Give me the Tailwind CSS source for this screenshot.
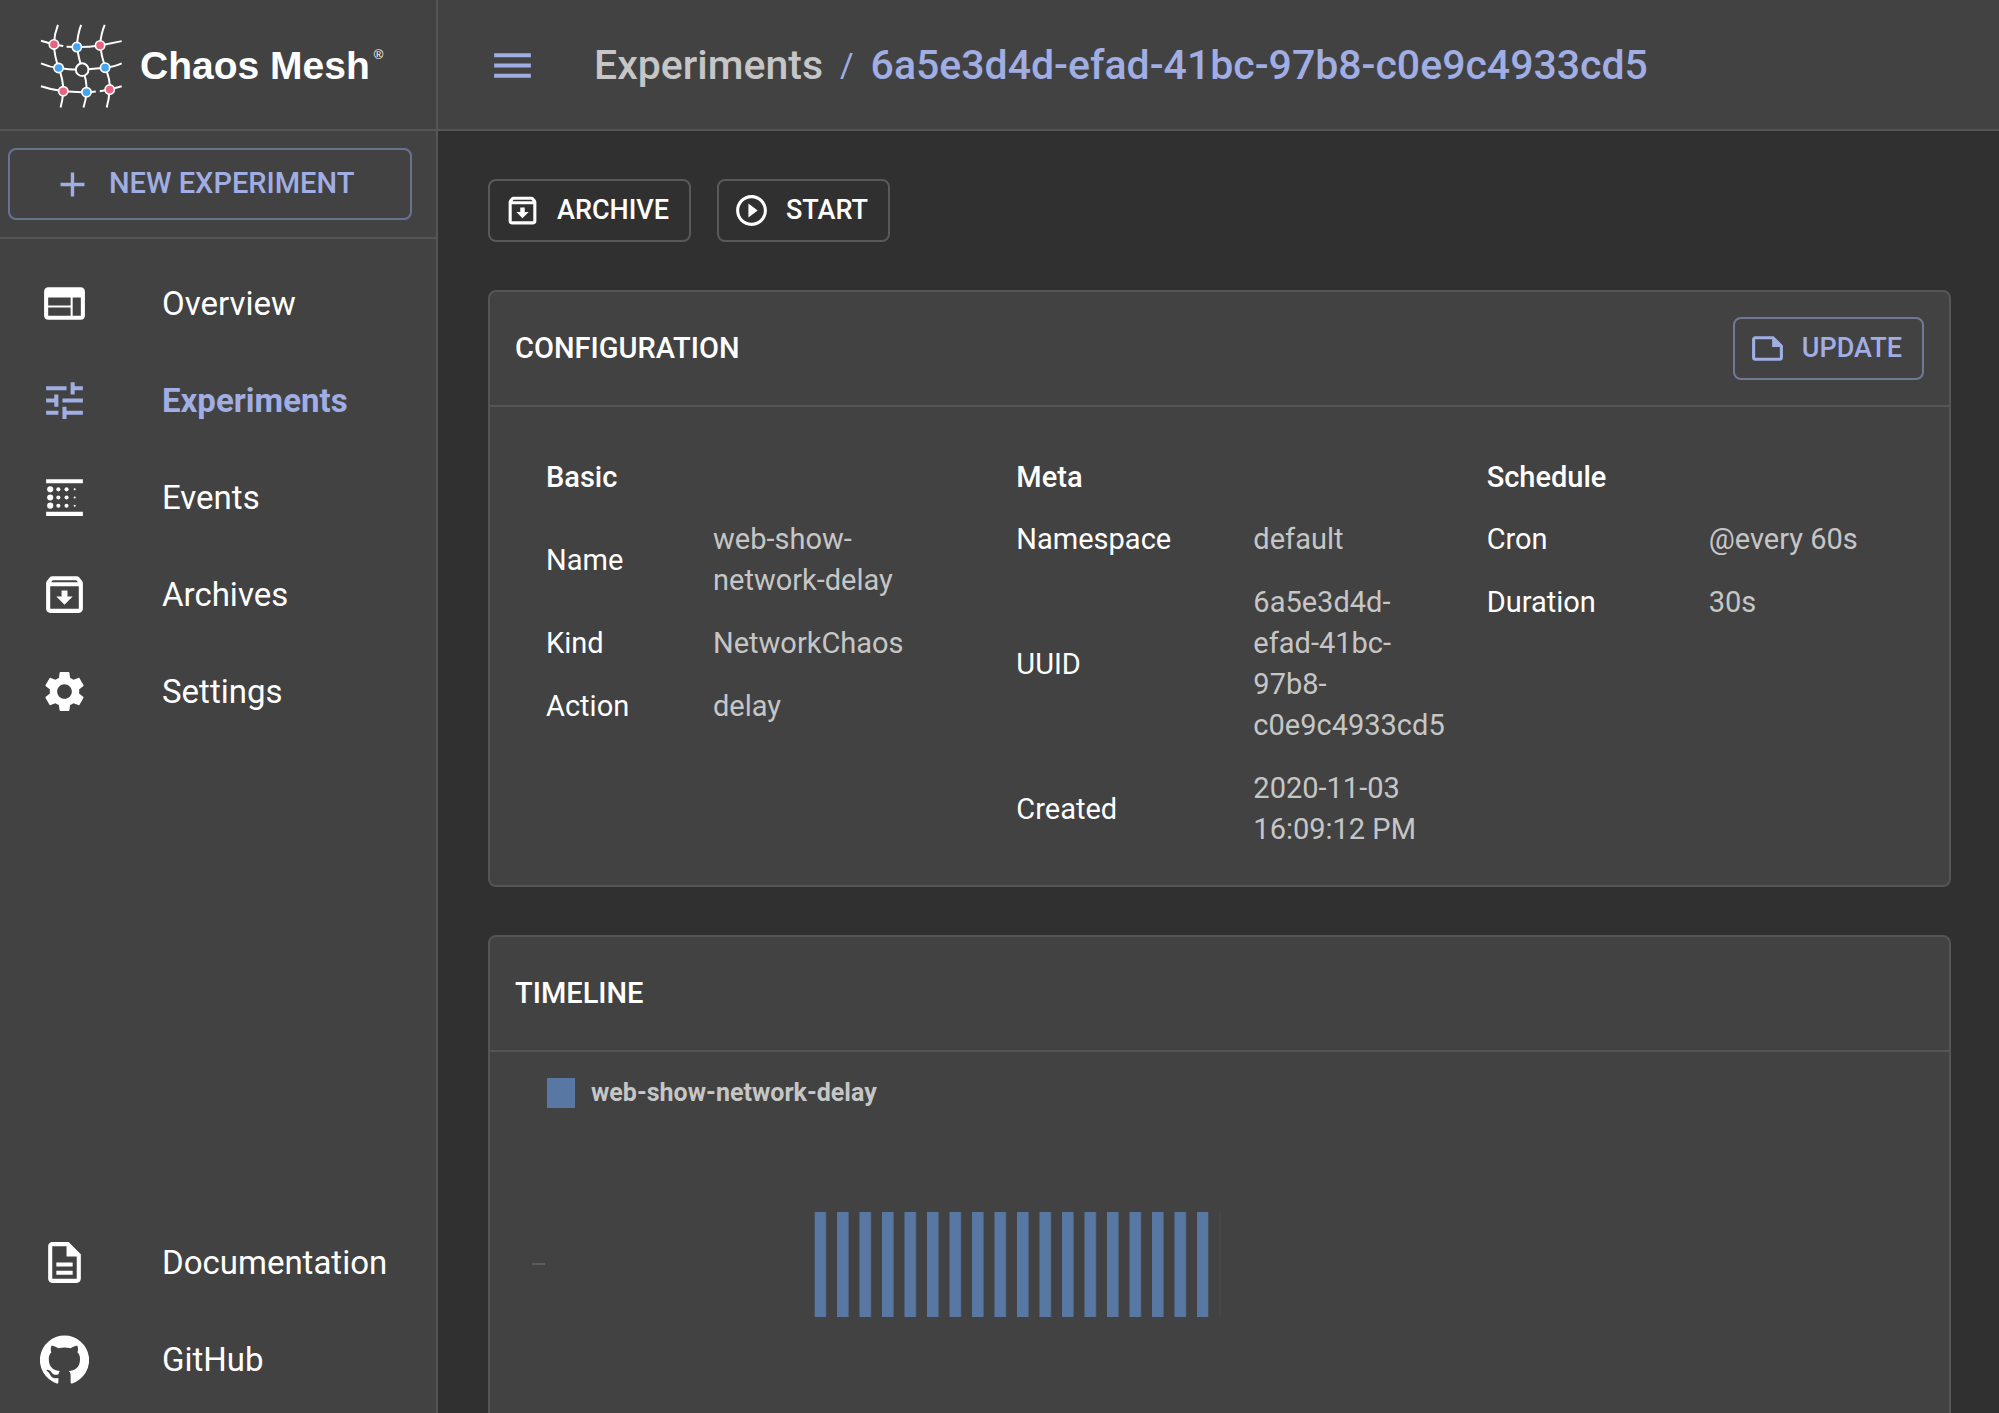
<!DOCTYPE html>
<html lang="en">

<head>
  <meta charset="UTF-8">
  <meta name="viewport" content="width=device-width, initial-scale=1.0">
  <title>Chaos Mesh Dashboard</title>
  <script src="https://cdn.jsdelivr.net/npm/@tailwindcss/browser@4"></script>
</head>

<body class="flex h-screen overflow-hidden bg-[#303030] font-['Roboto',sans-serif] text-white">

  <!-- Sidebar -->
  <aside class="flex w-[438px] shrink-0 flex-col border-r-2 border-[#555555] bg-[#424242]">
    <a href="#" class="flex h-[131px] shrink-0 items-center gap-[17px] border-b-2 border-[#555555] pt-[3px] pl-10">
      <svg class="h-[85px] w-[83px]" viewBox="120 70 250 255" fill="none" stroke="#fff" stroke-width="6">
        <path d="M174 72Q163 100 162 130Q163 165 176 202Q190 235 190 272Q188 300 182 321" />
        <path d="M244 72Q233 100 231 139Q236 170 247 207Q262 235 260 275Q258 300 251 321" />
        <path d="M315 72Q303 100 301 134Q305 165 316 201Q332 235 330 267Q328 295 321 321" />
        <path d="M123 120L162 131L190 136M200 138L231 139Q270 139 301 134L366 121" />
        <path d="M123 188Q150 200 176 202Q210 208 247 207L316 201Q345 198 366 188" />
        <path d="M123 257Q155 268 190 272L260 276L288 273M300 272L330 267L366 257" />
        <g fill="#e8647c" stroke-width="5">
          <circle cx="162" cy="131" r="14" />
          <circle cx="301" cy="134" r="14" />
          <circle cx="190" cy="272" r="14" />
          <circle cx="330" cy="267" r="14" />
        </g>
        <g fill="#45a5f5" stroke-width="5">
          <circle cx="231" cy="139" r="14" />
          <circle cx="176" cy="202" r="14" />
          <circle cx="316" cy="201" r="14" />
          <circle cx="260" cy="275" r="14" />
        </g>
        <circle cx="247" cy="207" r="19" fill="#424242" />
      </svg>
      <span class="flex items-start gap-1 font-['Liberation_Sans',sans-serif] font-bold">
        <span class="text-[39px] leading-[46px]">Chaos Mesh</span>
        <span class="text-[13px] leading-6 font-normal">®</span>
      </span>
    </a>

    <div class="border-b-2 border-[#555555] pt-[17px] pr-6 pb-[17px] pl-2">
      <button type="button" class="flex h-[72px] w-full items-center gap-4 rounded-lg border-2 border-[#6a7190] pl-[42px] text-[29px] font-medium text-[#a0aee4]">
        <svg class="size-[41px]" viewBox="0 0 24 24" fill="currentColor"><path d="M19 13h-6v6h-2v-6H5v-2h6V5h2v6h6v2z" /></svg>
        NEW EXPERIMENT
      </button>
    </div>

    <nav class="flex grow flex-col pt-4 pb-[5px] text-[33px]">
      <a href="#" class="flex h-[97px] items-center gap-[73px] pl-10">
        <svg class="size-[49px]" viewBox="0 0 24 24" fill="currentColor"><path d="M20 4H4c-1.1 0-1.99.9-1.99 2L2 18c0 1.1.9 2 2 2h16c1.1 0 2-.9 2-2V6c0-1.1-.9-2-2-2zm-5 14H4v-4h11v4zm0-5H4V9h11v4zm5 5h-4V9h4v9z" /></svg>
        Overview
      </a>
      <a href="#" class="flex h-[97px] items-center gap-[73px] pl-10 font-bold text-[#a0aee4]">
        <svg class="size-[49px]" viewBox="0 0 24 24" fill="currentColor"><path d="M3 17v2h6v-2H3zM3 5v2h10V5H3zm10 16v-2h8v-2h-8v-2h-2v6h2zM7 9v2H3v2h4v2h2V9H7zm14 4v-2H11v2h10zm-6-4h2V7h4V5h-4V3h-2v6z" /></svg>
        Experiments
      </a>
      <a href="#" class="flex h-[97px] items-center gap-[73px] pl-10">
        <svg class="size-[49px]" viewBox="0 0 24 24" fill="currentColor">
          <path d="M3 3h18v2H3zM3 19h18v2H3z" />
          <circle cx="5" cy="8" r="1.5" /><circle cx="5" cy="12" r="1.5" /><circle cx="5" cy="16" r="1.5" />
          <circle cx="9" cy="8" r="1" /><circle cx="9" cy="12" r="1" /><circle cx="9" cy="16" r="1" />
          <circle cx="13" cy="8" r="1" /><circle cx="13" cy="12" r="1" /><circle cx="13" cy="16" r="1" />
          <circle cx="17" cy="8" r=".5" /><circle cx="17" cy="12" r=".5" /><circle cx="17" cy="16" r=".5" />
        </svg>
        Events
      </a>
      <a href="#" class="flex h-[97px] items-center gap-[73px] pl-10">
        <svg class="size-[49px]" viewBox="0 0 24 24" fill="currentColor"><path d="M20.54 5.23l-1.39-1.68C18.88 3.21 18.47 3 18 3H6c-.47 0-.88.21-1.16.55L3.46 5.23C3.17 5.57 3 6.02 3 6.5V19c0 1.1.9 2 2 2h14c1.1 0 2-.9 2-2V6.5c0-.48-.17-.93-.46-1.27zM6.24 5h11.52l.83 1H5.42l.82-1zM5 19V8h14v11H5zm8.45-9h-2.9v3H8l4 4 4-4h-2.55z" /></svg>
        Archives
      </a>
      <a href="#" class="flex h-[97px] items-center gap-[73px] pl-10">
        <svg class="size-[49px]" viewBox="0 0 24 24" fill="currentColor"><path d="M19.14 12.94c.04-.3.06-.61.06-.94 0-.32-.02-.64-.07-.94l2.03-1.58c.18-.14.23-.41.12-.61l-1.92-3.32c-.12-.22-.37-.29-.59-.22l-2.39.96c-.5-.38-1.03-.7-1.62-.94l-.36-2.54c-.04-.24-.24-.41-.48-.41h-3.84c-.24 0-.43.17-.47.41l-.36 2.54c-.59.24-1.13.57-1.62.94l-2.39-.96c-.22-.08-.47 0-.59.22L2.74 8.87c-.12.21-.08.47.12.61l2.03 1.58c-.05.3-.09.63-.09.94s.02.64.07.94l-2.03 1.58c-.18.14-.23.41-.12.61l1.92 3.32c.12.22.37.29.59.22l2.39-.96c.5.38 1.03.7 1.62.94l.36 2.54c.05.24.24.41.48.41h3.84c.24 0 .44-.17.47-.41l.36-2.54c.59-.24 1.13-.56 1.62-.94l2.39.96c.22.08.47 0 .59-.22l1.92-3.32c.12-.22.07-.47-.12-.61l-2.01-1.58zM12 15.6c-1.98 0-3.6-1.62-3.6-3.6s1.62-3.6 3.6-3.6 3.6 1.62 3.6 3.6-1.62 3.6-3.6 3.6z" /></svg>
        Settings
      </a>
      <a href="#" class="mt-auto flex h-[97px] items-center gap-[73px] pl-10">
        <svg class="size-[49px]" viewBox="0 0 24 24" fill="currentColor"><path d="M8 16h8v2H8zm0-4h8v2H8zm6-10H6c-1.1 0-2 .9-2 2v16c0 1.1.89 2 1.99 2H18c1.1 0 2-.9 2-2V8l-6-6zm4 18H6V4h7v5h5v11z" /></svg>
        Documentation
      </a>
      <a href="#" class="flex h-[97px] items-center gap-[73px] pl-10">
        <svg class="size-[49px]" viewBox="0 0 24 24" fill="currentColor"><path d="M12 .3a12 12 0 0 0-3.8 23.4c.6.1.8-.3.8-.6v-2c-3.3.7-4-1.6-4-1.6-.6-1.4-1.4-1.8-1.4-1.8-1-.7.1-.7.1-.7 1.2 0 1.9 1.2 1.9 1.2 1 1.8 2.8 1.3 3.5 1 0-.8.4-1.3.7-1.6-2.7-.3-5.5-1.3-5.5-6 0-1.2.5-2.3 1.3-3.1-.2-.4-.6-1.6 0-3.2 0 0 1-.3 3.4 1.2a11.5 11.5 0 0 1 6 0c2.3-1.5 3.3-1.2 3.3-1.2.6 1.6.2 2.8 0 3.2.9.8 1.3 1.9 1.3 3.2 0 4.6-2.8 5.6-5.5 5.9.5.4.9 1 .9 2.2v3.3c0 .3.1.7.8.6A12 12 0 0 0 12 .3" /></svg>
        GitHub
      </a>
    </nav>
  </aside>

  <div class="flex min-w-0 grow flex-col">
    <!-- Top bar -->
    <header class="flex h-[131px] shrink-0 items-center gap-[57px] border-b-2 border-[#555555] bg-[#424242] pt-[2px] pl-[50px] text-[#a0aee4]">
      <button type="button" aria-label="Toggle menu">
        <svg class="size-[49px]" viewBox="0 0 24 24" fill="currentColor"><path d="M3 18h18v-2H3v2zm0-5h18v-2H3v2zm0-7v2h18V6H3z" /></svg>
      </button>
      <div class="flex items-center gap-[17px] text-[41px] font-medium">
        <a href="#" class="text-[#c6c6c6]">Experiments</a>
        <span class="text-[33px] font-normal">/</span>
        <h1>6a5e3d4d-efad-41bc-97b8-c0e9c4933cd5</h1>
      </div>
    </header>

    <main class="flex grow flex-col gap-12 overflow-hidden pt-12 pr-12 pl-[50px]">
      <div class="flex gap-[26px] text-[27px] font-medium">
        <button type="button" class="flex h-[63px] items-center gap-4 rounded-lg border-2 border-[#595959] pr-5 pl-[14px]">
          <svg class="size-[37px]" viewBox="0 0 24 24" fill="currentColor"><path d="M20.54 5.23l-1.39-1.68C18.88 3.21 18.47 3 18 3H6c-.47 0-.88.21-1.16.55L3.46 5.23C3.17 5.57 3 6.02 3 6.5V19c0 1.1.9 2 2 2h14c1.1 0 2-.9 2-2V6.5c0-.48-.17-.93-.46-1.27zM6.24 5h11.52l.83 1H5.42l.82-1zM5 19V8h14v11H5zm8.45-9h-2.9v3H8l4 4 4-4h-2.55z" /></svg>
          ARCHIVE
        </button>
        <button type="button" class="flex h-[63px] items-center gap-4 rounded-lg border-2 border-[#595959] pr-5 pl-[14px]">
          <svg class="size-[37px]" viewBox="0 0 24 24" fill="currentColor"><path d="M10 16.5l6-4.5-6-4.5v9zM12 2C6.48 2 2 6.48 2 12s4.48 10 10 10 10-4.48 10-10S17.52 2 12 2zm0 18c-4.41 0-8-3.59-8-8s3.59-8 8-8 8 3.59 8 8-3.59 8-8 8z" /></svg>
          START
        </button>
      </div>

      <!-- Configuration -->
      <section class="rounded-lg border-2 border-[#555555] bg-[#424242] text-[29px] leading-[41px]">
        <div class="flex h-[115px] items-center justify-between border-b-2 border-[#555555] px-[25px]">
          <h2 class="font-medium">CONFIGURATION</h2>
          <button type="button" class="flex h-[63px] items-center gap-4 rounded-lg border-2 border-[#717896] pr-5 pl-[14px] text-[27px] font-medium text-[#a0aee4]">
            <svg class="size-[37px]" viewBox="0 0 24 24" fill="currentColor"><path d="M16 4H4c-1.1 0-2 .9-2 2v12.01c0 1.1.9 1.99 2 1.99h16c1.1 0 2-.9 2-2v-8l-6-6zM4 18.01V6h11v5h5v7.01H4z" /></svg>
            UPDATE
          </button>
        </div>
        <div class="grid grid-cols-3 px-6 pt-[50px] pb-6">
          <div class="pl-8">
            <h3 class="mb-[10px] font-medium">Basic</h3>
            <table class="text-left">
              <tr>
                <th scope="row" class="w-[167px] font-normal">Name</th>
                <td class="w-[192px] py-[11px] text-[#c6c6c6]">web-show-network-delay</td>
              </tr>
              <tr>
                <th scope="row" class="font-normal">Kind</th>
                <td class="py-[11px] text-[#c6c6c6]">NetworkChaos</td>
              </tr>
              <tr>
                <th scope="row" class="font-normal">Action</th>
                <td class="py-[11px] text-[#c6c6c6]">delay</td>
              </tr>
            </table>
          </div>
          <div class="pl-8">
            <h3 class="mb-[10px] font-medium">Meta</h3>
            <table class="text-left">
              <tr>
                <th scope="row" class="w-[237px] font-normal">Namespace</th>
                <td class="w-[192px] py-[11px] text-[#c6c6c6]">default</td>
              </tr>
              <tr>
                <th scope="row" class="font-normal">UUID</th>
                <td class="py-[11px] text-[#c6c6c6]">6a5e3d4d-efad-41bc-97b8-c0e9c4933cd5</td>
              </tr>
              <tr>
                <th scope="row" class="font-normal">Created</th>
                <td class="py-[11px] text-[#c6c6c6]">2020-11-03 16:09:12 PM</td>
              </tr>
            </table>
          </div>
          <div class="pl-8">
            <h3 class="mb-[10px] font-medium">Schedule</h3>
            <table class="text-left">
              <tr>
                <th scope="row" class="w-[222px] font-normal">Cron</th>
                <td class="w-[192px] py-[11px] text-[#c6c6c6]">@every 60s</td>
              </tr>
              <tr>
                <th scope="row" class="font-normal">Duration</th>
                <td class="py-[11px] text-[#c6c6c6]">30s</td>
              </tr>
            </table>
          </div>
        </div>
      </section>

      <!-- Timeline -->
      <section class="shrink-0 rounded-lg border-2 border-[#555555] bg-[#424242]">
        <div class="flex h-[115px] items-center border-b-2 border-[#555555] px-[25px]">
          <h2 class="text-[29px] font-medium">TIMELINE</h2>
        </div>
        <div class="flex items-center gap-4 pt-[26px] pl-[57px] text-[25px] leading-[30px] font-bold text-[#c6c6c6]">
          <span class="h-[30px] w-7 bg-[#5878a3]"></span>
          web-show-network-delay
        </div>
        <svg class="h-[480px] w-full" role="img" aria-label="Experiment runs">
          <defs>
            <pattern id="runs" x="324.5" y="0" width="22.5" height="105" patternUnits="userSpaceOnUse">
              <rect width="11.5" height="105" fill="#5878a3" />
            </pattern>
          </defs>
          <path d="M42 156h13" stroke="#5c5c5c" stroke-width="2" />
          <svg y="104" height="105"><rect x="324.5" width="394" height="105" fill="url(#runs)" /></svg>
          <path d="M730 104v105" stroke="#4a4b52" />
        </svg>
      </section>
    </main>
  </div>
</body>

</html>
